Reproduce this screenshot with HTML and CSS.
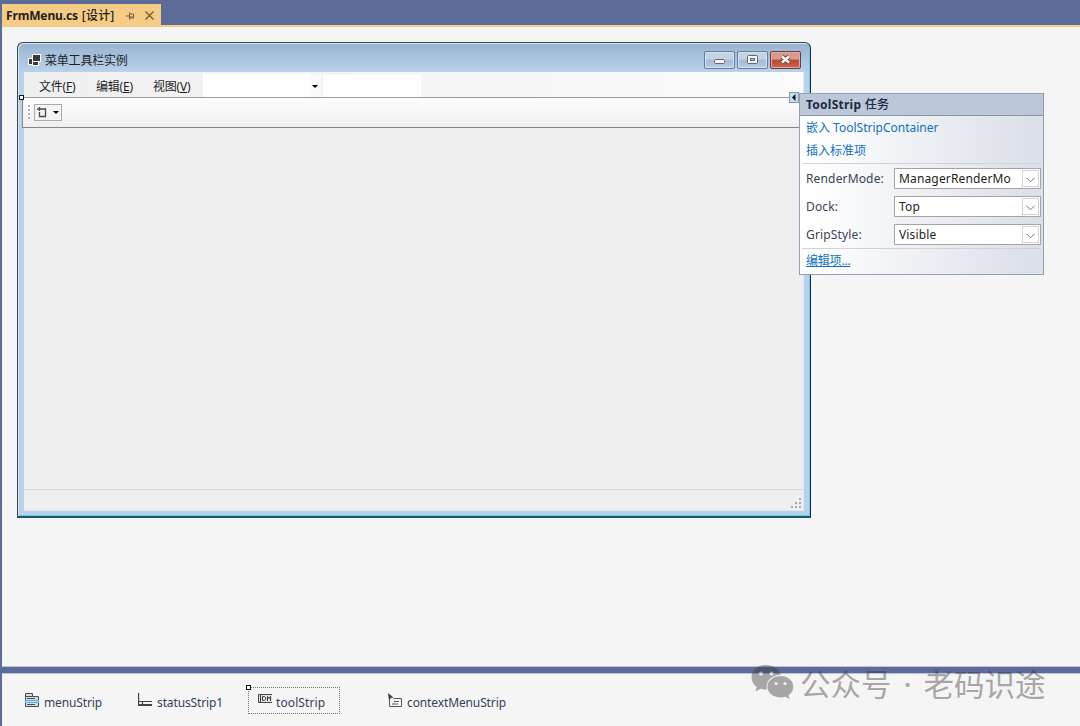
FILE: index.html
```html
<!DOCTYPE html>
<html lang="zh-CN">
<head>
  <meta charset="UTF-8" />
  <meta name="viewport" content="width=device-width, initial-scale=1.0" />
  <title>FrmMenu.cs [设计]</title>
  <link rel="stylesheet" href="styles.css">
</head>
<body>
  <div class="ide">
    <!-- Document tabs -->
    <div class="tabs">
      <div class="tab">
        <span class="tab-name">FrmMenu.cs <span class="tab-mode">[设计]</span></span>
        <svg class="pin" width="9" height="8" viewBox="0 0 9 8"><path d="M0 4h3M3.500 .5v7M3.500 2h4v4h-4M3.500 5h4" /></svg>
        <svg class="close" width="9" height="9" viewBox="0 0 9 9"><path d="M.5 .5l8 8M8.500 .5l-8 8" /></svg>
      </div>
    </div>

    <!-- Design surface -->
    <div class="surface">
      <div class="form">
        <div class="titlebar">
          <svg class="form-icon" width="13" height="12" viewBox="0 0 13 12">
            <path fill="#fff" d="M4 0h9v8h-2v4H4v-1H0V4h4z" />
            <path fill="#38393c" d="M5 1h7v6H5zM1 5h3v5H1zM5 8h5v3H5z" />
          </svg>
          <span class="form-title">菜单工具栏实例</span>
          <span class="win-btn"><svg width="31" height="17" viewBox="0 0 31 17"><rect x="10.500" y="8.500" width="10" height="4" rx="1" fill="#f5f5f5" stroke="#61666f" /></svg></span>
          <span class="win-btn"><svg width="31" height="17" viewBox="0 0 31 17"><rect x="10.500" y="4.500" width="10" height="8" rx="1" fill="#f5f5f5" stroke="#61666f" /><rect x="13.500" y="7.500" width="4" height="2" fill="#b5cbe3" stroke="#61666f" /></svg></span>
          <span class="win-btn red"><svg width="31" height="17" viewBox="0 0 31 17"><path d="M12 5.500l7 6M19 5.500l-7 6" stroke="#5d474b" stroke-width="4.600" /><path d="M12 5.500l7 6M19 5.500l-7 6" stroke="#f5f5f5" stroke-width="2.600" /></svg></span>
        </div>
        <div class="client">
          <div class="menu">
            <span class="menu-item">文件(<u>F</u>)</span>
            <span class="menu-item">编辑(<u>E</u>)</span>
            <span class="menu-item">视图(<u>V</u>)</span>
            <span class="menu-combo"><span class="drop"><i class="arrow"></i></span></span>
            <span class="menu-text"></span>
          </div>
          <div class="toolstrip">
            <i class="grip"></i>
            <span class="add-item">
              <svg width="11" height="11" viewBox="0 0 11 11"><path d="M3.500 0v4M1 2h4.500M5.500 2h4v7.500h-6V5" /></svg>
              <i class="arrow"></i>
            </span>
          </div>
          <div class="canvas"></div>
          <div class="status">
            <svg width="11" height="11" viewBox="0 0 11 11"><path fill="#aaa" d="M8 0h2v2H8zM4 4h2v2H4zM8 4h2v2H8zM0 8h2v2H0zM4 8h2v2H4zM8 8h2v2H8z" /></svg>
          </div>
        </div>
        <i class="handle form-handle"></i>
        <span class="glyph"><svg width="8" height="9" viewBox="0 0 8 9"><path fill="#111" d="M5.500 1v7L2 4.500z" /></svg></span>
      </div>

      <!-- Smart tag panel -->
      <div class="tasks">
        <div class="tasks-head">ToolStrip <b class="cn">任务</b></div>
        <div class="links">
          <a>嵌入 ToolStripContainer</a>
          <a>插入标准项</a>
        </div>
        <div class="props">
          <div class="prop"><label>RenderMode:</label><span class="select">ManagerRenderMo<span class="caret"><svg width="9" height="6" viewBox="0 0 9 6"><path d="M.5 .8l4 4 4-4" /></svg></span></span></div>
          <div class="prop"><label>Dock:</label><span class="select">Top<span class="caret"><svg width="9" height="6" viewBox="0 0 9 6"><path d="M.5 .8l4 4 4-4" /></svg></span></span></div>
          <div class="prop"><label>GripStyle:</label><span class="select">Visible<span class="caret"><svg width="9" height="6" viewBox="0 0 9 6"><path d="M.5 .8l4 4 4-4" /></svg></span></span></div>
        </div>
        <div class="edit"><a>编辑项...</a></div>
      </div>
    </div>

    <!-- Component tray -->
    <div class="tray">
      <div class="component menu-component">
        <svg width="15" height="14" viewBox="0 0 15 14">
          <path fill="#d9dadc" stroke="#4c4d50" d="M.5 13.500V.5h7v3h6v10z" />
          <path fill="none" stroke="#4c4d50" d="M.5 3.500h7M2 5.500h8M2 11.500h8" />
          <path fill="#55b9e6" d="M0 7h14v3H0z" /><path fill="#a8e2fb" d="M1 8h12v1H1z" />
        </svg>
        <span>menuStrip</span>
      </div>
      <div class="component status-component">
        <svg width="14" height="14" viewBox="0 0 14 14"><path fill="none" stroke="#444548" stroke-width="1.200" d="M.6 0v12M.6 8.500h13.400M4.500 8.500V12" /><path stroke="#444548" stroke-width="2" d="M0 12h14" /></svg>
        <span>statusStrip1</span>
      </div>
      <div class="component tool-component">
        <i class="handle"></i>
        <svg width="14" height="9" viewBox="0 0 14 9"><path fill="#e3e3e3" stroke="#48494c" d="M14 .5H.5v8H14" /><path fill="none" stroke="#36373a" d="M2.500 1v7M4.500 2.500v4M5 2.500h1.500l1 1v2l-1 1H5M9.500 7V2.500l1.500 2 1.500-2V7" /></svg>
        <span>toolStrip</span>
      </div>
      <div class="component context-component">
        <svg width="15" height="15" viewBox="0 0 15 15"><path fill="none" stroke="#55565a" d="M5.500 5.500h8v8h-12V7M6 8.500h5M4 11h6" /><path fill="#38393c" d="M0 0l5.500 4.500-2.300.3L1 7.500z" /></svg>
        <span>contextMenuStrip</span>
      </div>
    </div>

    <!-- Watermark over the lower right corner -->
    <div class="watermark">
      <svg width="43" height="36" viewBox="0 0 43 36">
        <path d="M15 1C6.500 1 .5 6.500.5 13.300c0 4 2 7.300 5.200 9.600L4.500 27.500l5.200-2.700c2 .6 4 .8 6.300.7C14 17.500 20.500 11 29.700 10.700 28 5 22 1 15 1z" />
        <path d="M29.500 12C22 12 16.500 16.800 16.500 22.800s5.500 10.700 13 10.700c1.700 0 3.200-.2 4.700-.7l4.500 2.500-1.200-4c3-2.100 4.800-5 4.800-8.500C42.300 16.800 36.800 12 29.500 12z" />
        <g fill="#eee"><circle cx="10" cy="9.500" r="2" /><circle cx="20.500" cy="9.500" r="2" /><circle cx="25" cy="19.500" r="1.600" /><circle cx="34" cy="19.500" r="1.600" /></g>
      </svg>
      <span>公众号 · 老码识途</span>
    </div>
  </div>
</body>
</html>
```
FILE: styles.css
```css
* {
  box-sizing: border-box;
}

body {
  margin: 0;
  font-family: "Noto Sans", "Noto Sans CJK SC", sans-serif;
  font-size: 12px;
  color: #1e1e1e;
}

svg {
  display: block;
  flex: none;
}

.ide {
  position: relative;
  width: 1080px;
  height: 726px;
  overflow: hidden;
  display: flex;
  flex-direction: column;
  background: #f5f5f5;
  border-left: 2px solid #5d6b99;
}

.tabs {
  flex: none;
  height: 27px;
  padding-top: 4px;
  background: #5d6b99;
  border-bottom: 2px solid #f5cc84;
}

.tab {
  display: flex;
  align-items: center;
  width: 159px;
  height: 23px;
  padding-left: 4px;
  background: #f5cc84;
}

.tab-name {
  width: 120px;
  margin-top: -2px;
  font-weight: bold;
  font-size: 12px;
  letter-spacing: -0.15px;
  white-space: nowrap;
}

.tab-mode {
  margin-left: 1px;
  font-weight: 500;
  letter-spacing: 0.2px;
}

.tab svg {
  fill: none;
  stroke: #77583a;
}

.tab .close {
  margin-left: 10px;
  stroke-width: 1.3;
}

.surface {
  flex: none;
  position: relative;
  height: 640px;
  padding: 15px;
}

.form {
  position: relative;
  display: flex;
  flex-direction: column;
  width: 794px;
  height: 476px;
  padding: 0 6px 5px;
  border: 1px solid #3c4750;
  border-right: 1px solid #14303c;
  border-bottom: 2px solid #175a68;
  border-radius: 6px 6px 0 0;
  background: linear-gradient(#99b4d1, #b9d1ea 29px);
  box-shadow: inset 1px 1px #d5e4f2, inset -1px -1px #65cfe8;
}

.titlebar {
  display: flex;
  height: 29px;
  padding: 8px 3px 0 4px;
}

.form-icon {
  margin-top: 3px;
}

.form-title {
  flex: 1;
  margin-left: 4px;
  line-height: 20px;
  letter-spacing: -0.2px;
}

.win-btn {
  width: 31px;
  height: 18px;
  margin-left: 2px;
  border: 1px solid #667b98;
  border-radius: 2px;
  background: linear-gradient(#c3d4e7 45%, #a3bbd5 50%, #b6cee7);
  box-shadow: inset 0 0 0 1px #d5e3f1;
}

.win-btn svg {
  margin: -1px;
}

.win-btn.red {
  border-color: #673e48;
  background: linear-gradient(#dc9a8c 45%, #bd4630 50%, #cc684e);
  box-shadow: inset 0 0 0 1px #e2ada0;
}

.client {
  flex: 1;
  display: flex;
  flex-direction: column;
  width: 780px;
  border-right: 1px solid #dfe8f0;
  border-bottom: 1px solid #dfe8f0;
  background: #efefef;
}

.menu {
  flex: none;
  display: flex;
  height: 25px;
  padding-left: 15px;
  background: linear-gradient(90deg, #f0f0f0, #fbfbfb);
}

.menu-item {
  width: 57px;
  line-height: 29px;
  letter-spacing: -0.2px;
}

.menu-combo {
  display: flex;
  justify-content: flex-end;
  width: 118px;
  margin: 2px 0 0 -7px;
  background: #fff;
}

.drop {
  display: flex;
  width: 11px;
  padding: 11px 0 0 2px;
  background: #fafafa;
}

.menu-text {
  width: 98px;
  margin: 3px 0 0 2px;
  background: #fff;
}

.arrow {
  width: 6px;
  height: 3px;
  background: #000;
  clip-path: polygon(0 0, 100% 0, 50% 100%);
}

.toolstrip {
  flex: none;
  display: flex;
  width: 782px;
  height: 31px;
  margin-left: -2px;
  padding: 6px 0 0 5px;
  border: 1px solid #858585;
  border-top-color: #9b9b9b;
  border-right: 0;
  background: linear-gradient(#fdfdfd, #efefef);
}

.grip {
  width: 2px;
  height: 15px;
  margin-top: 1px;
  background: repeating-linear-gradient(#b5b5b5 0 2px, transparent 2px 4px);
}

.add-item {
  display: flex;
  align-items: center;
  width: 28px;
  height: 17px;
  margin-left: 4px;
  padding-left: 1px;
  border: 1px solid #aaa;
  background: #f4f4f4;
}

.add-item svg {
  fill: none;
  stroke: #4a4a4a;
  stroke-width: 1.3;
}

.add-item .arrow {
  margin-left: 6px;
}

.canvas {
  flex: 1;
}

.status {
  display: flex;
  justify-content: flex-end;
  height: 21px;
  padding: 8px 1px 0 0;
  border-top: 1px solid #d7d7d7;
}

.handle {
  position: absolute;
  width: 5px;
  height: 5px;
  border: 1px solid #111;
  background: #fff;
}

.form-handle {
  left: 1px;
  top: 52px;
}

.glyph {
  position: absolute;
  left: 771px;
  top: 49px;
  width: 10px;
  height: 11px;
  border: 1px solid #8d969c;
  background: #bcdff2;
}

/* smart tag panel */
.tasks {
  position: absolute;
  left: 797px;
  top: 66px;
  width: 245px;
  height: 182px;
  border: 1px solid #929fb4;
  background: linear-gradient(90deg, #fff 5%, #dce0e8 95%);
}

.tasks-head {
  height: 22px;
  padding-left: 6px;
  line-height: 21px;
  font-weight: bold;
  letter-spacing: 0.25px;
  color: #1b2944;
  background: #bcc7d8;
  border-bottom: 1px solid #8594ab;
}

.cn {
  font-weight: 500;
}

.links {
  display: flex;
  flex-direction: column;
  height: 48px;
  margin: 0 2px;
  padding-left: 4px;
  line-height: 23px;
  border-bottom: 1px solid #ced2de;
}

.tasks a {
  color: #0e70c0;
}

.props {
  display: flex;
  flex-direction: column;
  gap: 7px;
  height: 85px;
  margin: 0 2px;
  padding: 4px 0 0 4px;
  letter-spacing: 0.15px;
  border-bottom: 1px solid #ced2de;
}

.prop {
  display: flex;
}

.prop label {
  width: 88px;
  line-height: 21px;
  color: #3b4356;
}

.select {
  display: flex;
  justify-content: space-between;
  width: 147px;
  height: 21px;
  padding-left: 4px;
  line-height: 19px;
  border: 1px solid #a4a4a7;
  background: #fff;
}

.caret {
  width: 17px;
  height: 17px;
  margin: 1px;
  padding: 6px 0 0 3px;
  border: 1px solid #d1d3d6;
}

.caret svg {
  fill: none;
  stroke: #777;
}

.edit {
  padding-left: 6px;
  line-height: 23px;
  letter-spacing: -0.2px;
  text-decoration: underline;
  color: #0e70c0;
}

/* component tray */
.tray {
  flex: 1;
  display: flex;
  align-items: flex-start;
  padding-top: 14px;
  background: #f5f5f5;
  border-top: 6px solid #5d6b99;
  box-shadow: inset 0 1px #bcc5d8, 0 -1px #bcc5d8;
}

.component {
  position: relative;
  display: flex;
  height: 27px;
  line-height: 32px;
  letter-spacing: -0.12px;
  color: #344159;
}

.component svg {
  margin-top: 6px;
}

.component span {
  margin-left: 4px;
}

.menu-component {
  width: 113px;
  margin-left: 23px;
}

.status-component {
  width: 110px;
}

.status-component span {
  margin-left: 5px;
}

.tool-component {
  width: 92px;
  padding-left: 9px;
  border: 1px dotted #777;
  line-height: 30px;
  letter-spacing: 0.1px;
}

.tool-component .handle {
  left: -3px;
  top: -3px;
}

.context-component {
  margin-left: 48px;
}

/* watermark */
.watermark {
  position: absolute;
  left: 749px;
  top: 664px;
  display: flex;
  opacity: 0.4;
  color: #333;
}

.watermark svg {
  fill: #333;
}

.watermark span {
  margin: -2px 0 0 6px;
  font-family: "Noto Sans", "Noto Sans CJK SC", sans-serif;
  font-size: 30.500px;
  line-height: 44px;
  word-spacing: 4px;
  white-space: nowrap;
}
```
